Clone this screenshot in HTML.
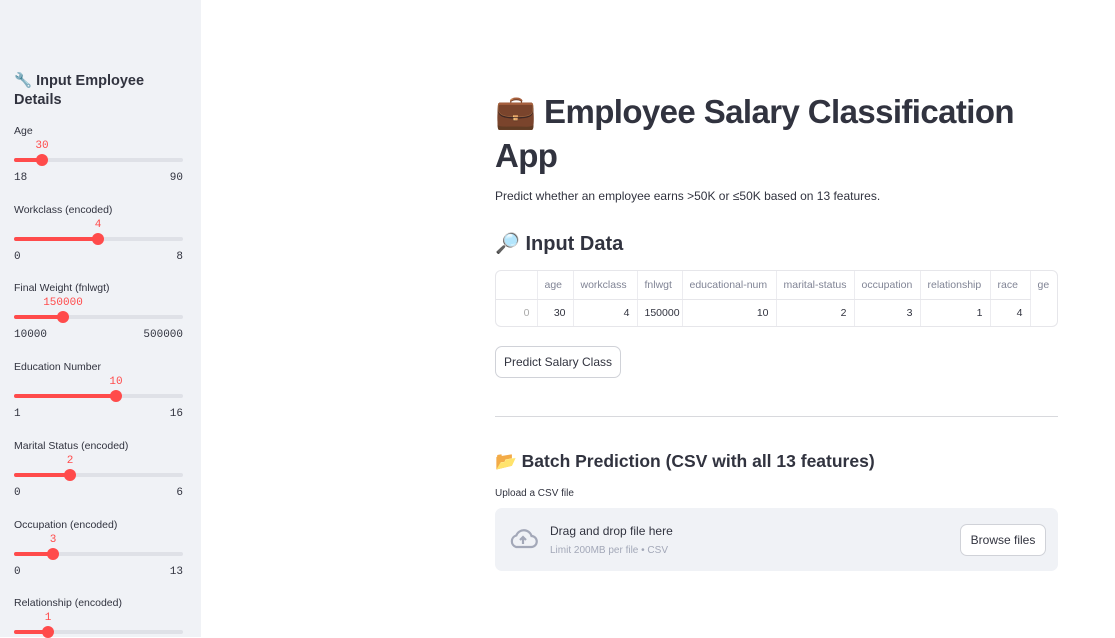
<!DOCTYPE html>
<html><head><meta charset="utf-8"><style>
*{margin:0;padding:0;box-sizing:border-box}
body{width:1115px;height:637px;overflow:hidden;background:#fff;font-family:"Liberation Sans",sans-serif;color:#31333f;position:relative}
.sb{position:absolute;left:0;top:0;width:201px;height:637px;background:#f0f2f6}
.a{position:absolute;white-space:nowrap}
.lbl{font-size:10.5px;color:#31333f}
.val{font-family:"Liberation Mono",monospace;font-size:11px;color:#ff4b4b}
.mm{font-family:"Liberation Mono",monospace;font-size:11px;color:#31333f}
.trk{position:absolute;left:14px;width:169px;height:4px;border-radius:2px;background:#dfe1e7}
.fill{position:absolute;left:0;top:0;height:4px;border-radius:2px;background:#ff4b4b}
.th{position:absolute;top:-4px;width:12px;height:12px;border-radius:50%;background:#ff4b4b;margin-left:-6px}
table{border-collapse:collapse;font-size:10.5px;table-layout:fixed;width:562px}
td{height:28px;border-right:1px solid #ececf0;padding:0 7px;white-space:nowrap;overflow:hidden}
tr:first-child td{color:#808495;border-bottom:1px solid #e6e6ea}
tr:last-child td{text-align:right}
</style></head><body>
<div class="sb">
<div class="a" style="left:14px;top:72px;font-size:14.5px;font-weight:bold;line-height:19px">🔧 Input Employee<br>Details</div>
</div>
<div id="s"></div>
<script>
var d=[["Age","30",42,"18","90"],["Workclass (encoded)","4",98,"0","8"],["Final Weight (fnlwgt)","150000",63,"10000","500000"],["Education Number","10",116,"1","16"],["Marital Status (encoded)","2",70,"0","6"],["Occupation (encoded)","3",53,"0","13"],["Relationship (encoded)","1",48,"",""]];
var h="";
d.forEach(function(r,i){var y=124+i*78.7;
h+='<div class="a lbl" style="left:14px;top:'+(y+1)+'px">'+r[0]+'</div>';
h+='<div class="a val" style="left:'+r[2]+'px;top:'+(y+16)+'px;transform:translateX(-50%)">'+r[1]+'</div>';
h+='<div class="trk" style="top:'+(y+34)+'px"><div class="fill" style="width:'+(r[2]-14)+'px"></div><div class="th" style="left:'+(r[2]-14)+'px"></div></div>';
h+='<div class="a mm" style="left:14px;top:'+(y+48)+'px">'+r[3]+'</div>';
h+='<div class="a mm" style="right:932px;top:'+(y+48)+'px">'+r[4]+'</div>';});
document.getElementById("s").innerHTML=h;
</script>
<div class="a" style="left:495px;top:90px;font-size:33px;font-weight:bold;line-height:44px;letter-spacing:-0.6px">💼 Employee Salary Classification<br>App</div>
<div class="a" style="left:495px;top:189px;font-size:12px">Predict whether an employee earns &gt;50K or ≤50K based on 13 features.</div>
<div class="a" style="left:495px;top:231px;font-size:20px;font-weight:bold">🔎 Input Data</div>
<div class="a" style="left:495px;top:270px;width:563px;height:57px;border:1px solid #e6e6ea;border-radius:6px;overflow:hidden">
<table>
<colgroup><col style="width:41px"><col style="width:36px"><col style="width:64px"><col style="width:45px"><col style="width:94px"><col style="width:78px"><col style="width:66px"><col style="width:70px"><col style="width:40px"><col style="width:28px"></colgroup>
<tr><td></td><td>age</td><td>workclass</td><td>fnlwgt</td><td>educational-num</td><td>marital-status</td><td>occupation</td><td>relationship</td><td>race</td><td style="border:none">ge</td></tr>
<tr><td style="color:#aaa">0</td><td>30</td><td>4</td><td style="text-align:left">150000</td><td>10</td><td>2</td><td>3</td><td>1</td><td>4</td><td style="border:none"></td></tr>
</table></div>
<div class="a" style="left:495px;top:346px;width:126px;height:32px;border:1px solid #d0d2d8;border-radius:7px;font-size:12px;line-height:30px;text-align:center">Predict Salary Class</div>
<div class="a" style="left:495px;top:416px;width:563px;height:1px;background:#d8d9dd"></div>
<div class="a" style="left:495px;top:451px;font-size:17.5px;font-weight:bold">📂 Batch Prediction (CSV with all 13 features)</div>
<div class="a" style="left:495px;top:488px;font-size:10px">Upload a CSV file</div>
<div class="a" style="left:495px;top:508px;width:563px;height:63px;background:#f0f2f6;border-radius:7px">
<svg class="a" style="left:13px;top:19px" width="30" height="24" viewBox="0 0 30 24"><path d="M8 20h15a5.5 5.5 0 0 0 .5-11A8 8 0 0 0 8.3 8.5 6 6 0 0 0 8 20z" fill="none" stroke="#a3a8b8" stroke-width="2.2"/><path d="M15 17v-7M12 13l3-3 3 3" stroke="#a3a8b8" stroke-width="2.2" fill="none"/></svg>
<div class="a" style="left:55px;top:16px;font-size:12px">Drag and drop file here</div>
<div class="a" style="left:55px;top:37px;font-size:10px;color:#a3a8b8">Limit 200MB per file • CSV</div>
<div class="a" style="left:465px;top:16px;width:86px;height:32px;background:#fff;border:1px solid #d0d2d8;border-radius:7px;font-size:12px;line-height:30px;text-align:center">Browse files</div>
</div>
</body></html>
